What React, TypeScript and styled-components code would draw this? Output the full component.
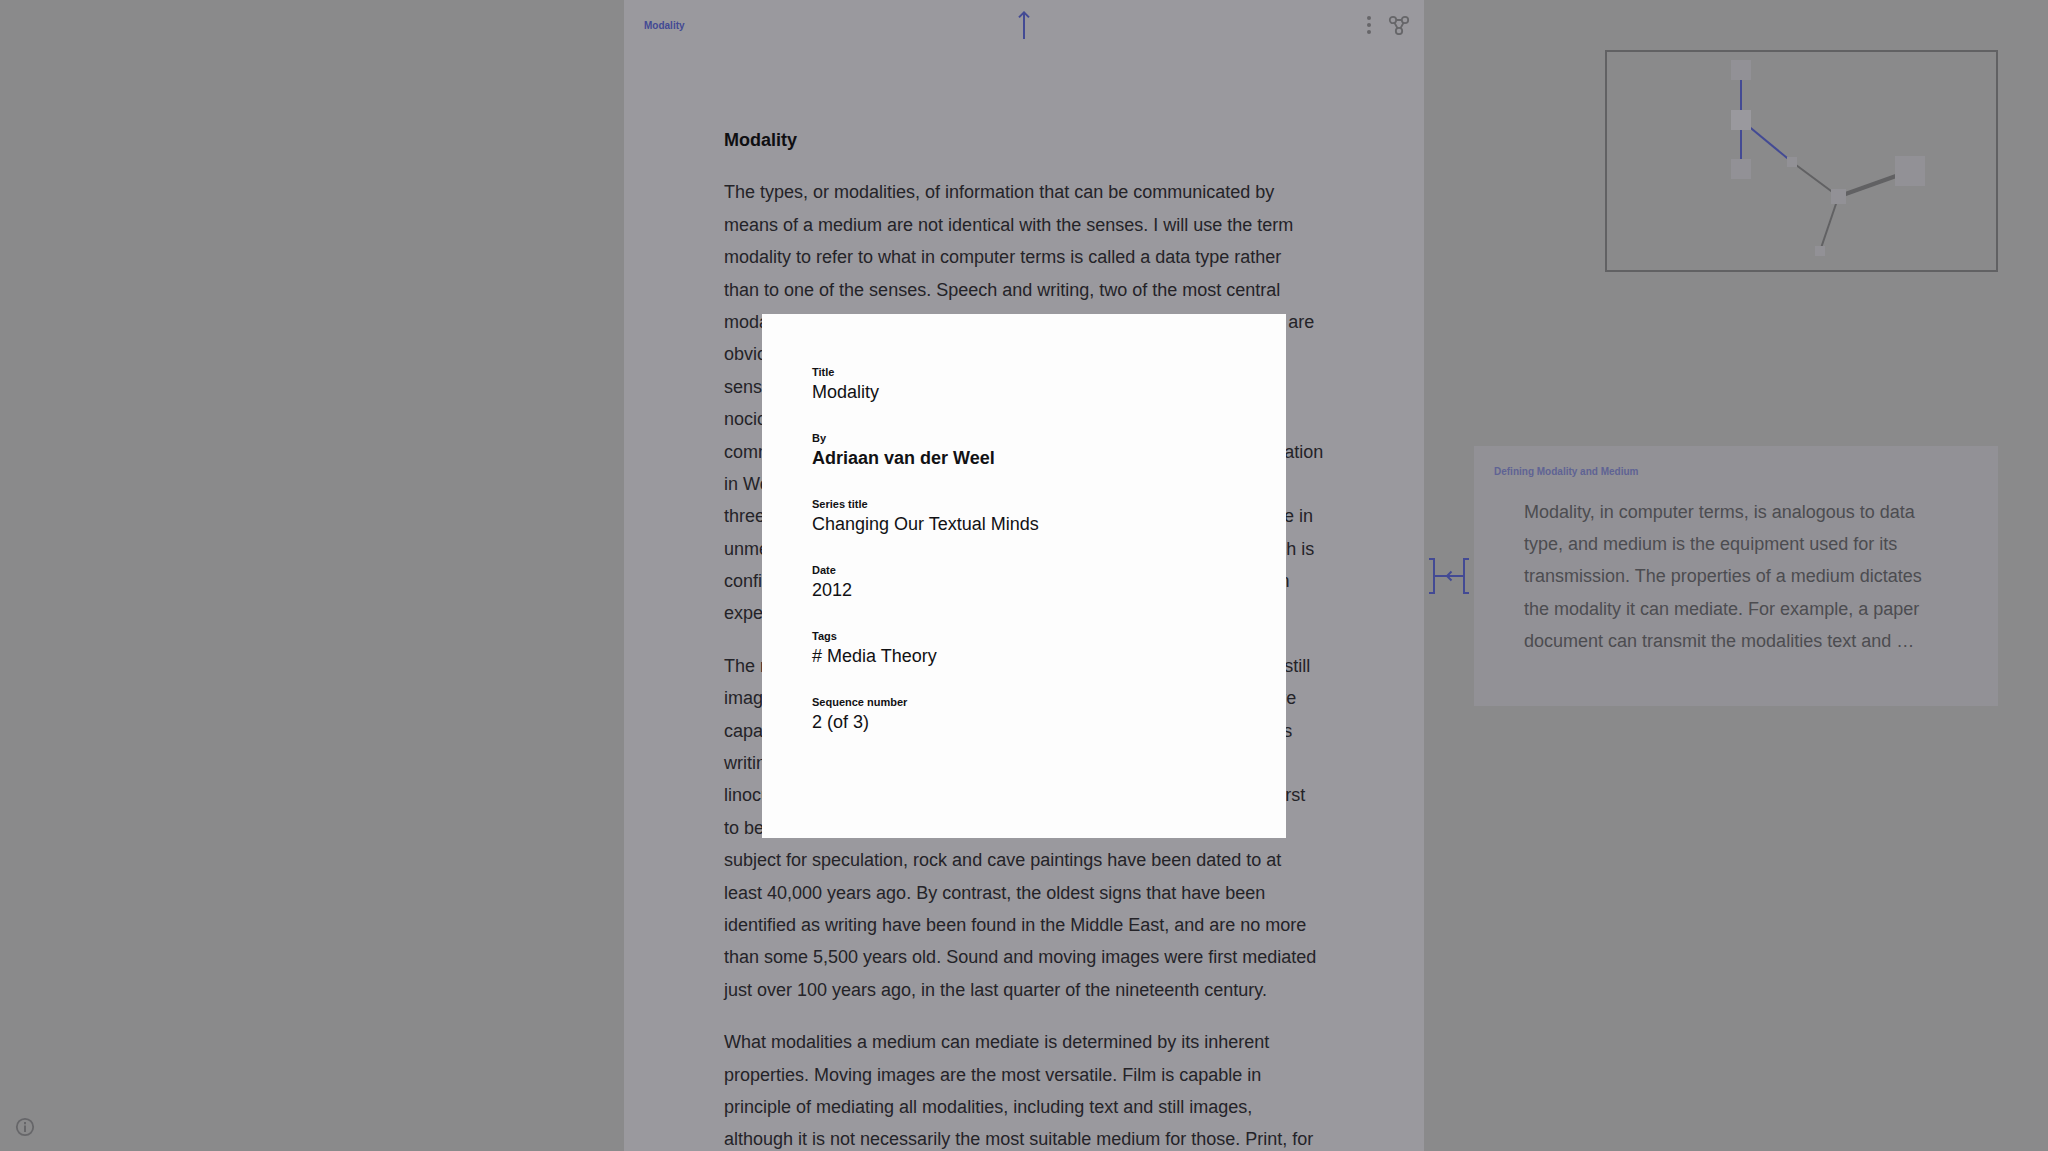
import React from "react";
import styled, { createGlobalStyle } from "styled-components";

const color = {
  desk: "#8a8a8b",
  page: "#9a999e",
  card: "#929196",
  line: "#616163",
  icon: "#666669",
  accent: "#434a94",
  accentSoft: "#5f6394",
};

const GlobalStyle = createGlobalStyle`
  * { box-sizing: border-box; }
  body {
    margin: 0;
    background: ${color.desk};
    font-family: "Helvetica Neue", "Liberation Sans", Arial, sans-serif;
    font-size: 18px;
    -webkit-font-smoothing: antialiased;
  }
  h1, h2, p, dl, dd { margin: 0; font-weight: inherit; font-size: inherit; }
`;

const Desk = styled.div`
  display: grid;
  grid-template-columns: 1fr 800px 1fr;
  height: 100vh;
  overflow: hidden;
`;

const IconButton = styled.button`
  display: flex;
  padding: 0;
  border: 0;
  background: none;
  color: ${color.icon};
  cursor: pointer;
`;

const LeftSide = styled.aside`
  display: flex;
  align-items: flex-end;
  padding: 14px 15px;
`;

const Page = styled.main`
  background: ${color.page};
  overflow: hidden;
`;

const PageHeader = styled.header`
  display: grid;
  grid-template-columns: 1fr auto 1fr;
  align-items: center;
  height: 50px;
  padding: 0 14px;
`;

const HeaderTitle = styled.div`
  display: flex;
  padding: 2px 6px 0;
`;

const SmallTitle = styled.a<{ $soft?: boolean }>`
  color: ${(p) => (p.$soft ? color.accentSoft : color.accent)};
  font-size: 10px;
  font-weight: 700;
  line-height: 16px;
  text-decoration: none;
`;

const Actions = styled.div`
  display: flex;
  justify-content: flex-end;
  align-items: center;
  gap: 7px;
`;

const Article = styled.article`
  display: flex;
  flex-direction: column;
  gap: 20px;
  padding: 74px 100px;
  color: #242328;
  line-height: 1.8;
`;

const Heading = styled.h1`
  && { font-weight: 700; }
  color: #0f0f12;
`;

const Paragraph = styled.p`
  white-space: pre;
`;

const RightSide = styled.aside`
  display: grid;
  grid-template-rows: 1fr auto 1fr;
  padding-right: 50px;
`;

const MapFrame = styled.div`
  justify-self: end;
  align-self: start;
  display: flex;
  margin-top: 50px;
  border: 2px solid ${color.line};
`;

const LinkRow = styled.div`
  display: grid;
  grid-template-columns: 50px 1fr;
  align-items: center;
`;

const Connector = styled.div`
  display: flex;
  justify-content: center;
  color: ${color.accent};
`;

const Card = styled.section`
  display: flex;
  flex-direction: column;
  gap: 16px;
  height: 260px;
  padding: 18px 20px;
  background: ${color.card};
`;

const CardText = styled.p`
  padding: 0 30px;
  color: #4c4c50;
  line-height: 1.8;
  white-space: pre;
`;

const Overlay = styled.div`
  position: fixed;
  inset: 0;
  display: grid;
  place-items: center;
`;

const Dialog = styled.section`
  width: 524px;
  aspect-ratio: 1;
  padding: 50px;
  background: #fdfdfd;
  color: #111114;
`;

const Fields = styled.dl`
  display: flex;
  flex-direction: column;
  gap: 26px;
`;

const Label = styled.dt`
  font-size: 11px;
  font-weight: 700;
  line-height: 16px;
`;

const Value = styled.dd<{ $strong?: boolean }>`
  && { font-weight: ${(p) => (p.$strong ? 700 : 400)}; }
  line-height: 24px;
`;

const paragraphs = [
  `The types, or modalities, of information that can be communicated by
means of a medium are not identical with the senses. I will use the term
modality to refer to what in computer terms is called a data type rather
than to one of the senses. Speech and writing, two of the most central
modalities with which we will often be concerned throughout this book, are
obviously perceived by way of the ear and the eye. Other
senses, such as touch, smell, taste, balance and even
nociception, may be involved in the way we take in any
communication of one kind or another, as the communication of information
in Western culture has come to rely chiefly on just
three modalities: text, still image and sound. These are readily available in
unmediated form as long as we are face to face with one another, which is
confined to the here and now and so to the direct and individual human
experience of those who are present.`,
  `The modalities of mediated communication are today text, sound, and still
images, and moving images. Not all media, however, by themselves are
capable of mediating every one of the modalities. Paper can, exactly as
writing tablets could, carry both text and drawings, and
linocuts may carry both too. Of the modalities, the still image was the first
to be mediated. Although the exact date remains a
subject for speculation, rock and cave paintings have been dated to at
least 40,000 years ago. By contrast, the oldest signs that have been
identified as writing have been found in the Middle East, and are no more
than some 5,500 years old. Sound and moving images were first mediated
just over 100 years ago, in the last quarter of the nineteenth century.`,
  `What modalities a medium can mediate is determined by its inherent
properties. Moving images are the most versatile. Film is capable in
principle of mediating all modalities, including text and still images,
although it is not necessarily the most suitable medium for those. Print, for`,
];

const summary = `Modality, in computer terms, is analogous to data
type, and medium is the equipment used for its
transmission. The properties of a medium dictates
the modality it can mediate. For example, a paper
document can transmit the modalities text and …`;

const fields = [
  { label: "Title", value: "Modality" },
  { label: "By", value: "Adriaan van der Weel", strong: true },
  { label: "Series title", value: "Changing Our Textual Minds" },
  { label: "Date", value: "2012" },
  { label: "Tags", value: "# Media Theory" },
  { label: "Sequence number", value: "2 (of 3)" },
];

const nodes = [
  { x: 126, y: 10, size: 20 },
  { x: 126, y: 60, size: 20, current: true },
  { x: 126, y: 109, size: 20 },
  { x: 182, y: 107, size: 10 },
  { x: 226, y: 139, size: 15 },
  { x: 290, y: 106, size: 30 },
  { x: 210, y: 196, size: 10 },
];

const edges = [
  { from: 0, to: 1, width: 2, active: true },
  { from: 1, to: 2, width: 2, active: true },
  { from: 1, to: 3, width: 2, active: true },
  { from: 3, to: 4, width: 2 },
  { from: 4, to: 5, width: 4 },
  { from: 4, to: 6, width: 2 },
];

const center = (i: number) => ({
  x: nodes[i].x + nodes[i].size / 2,
  y: nodes[i].y + nodes[i].size / 2,
});

function MiniMap() {
  return (
    <svg width="389" height="218" viewBox="2 2 389 218" role="img" aria-label="Map">
      {edges.map((e, i) => {
        const a = center(e.from);
        const b = center(e.to);
        return (
          <line
            key={i}
            x1={a.x}
            y1={a.y}
            x2={b.x}
            y2={b.y}
            stroke={e.active ? color.accent : color.line}
            strokeWidth={e.width}
          />
        );
      })}
      {nodes.map((n, i) => (
        <rect
          key={i}
          x={n.x}
          y={n.y}
          width={n.size}
          height={n.size}
          fill={n.current ? color.page : color.card}
        />
      ))}
    </svg>
  );
}

export default function App() {
  return (
    <>
      <GlobalStyle />
      <Desk>
        <LeftSide>
          <IconButton aria-label="Information">
            <svg width="20" height="20" viewBox="0 0 20 20" fill="none" stroke="currentColor">
              <circle cx="10" cy="10" r="8.2" strokeWidth="1.8" />
              <path d="M10 8.6V15M10 5V7.2" strokeWidth="2" />
            </svg>
          </IconButton>
        </LeftSide>

        <Page>
          <PageHeader>
            <HeaderTitle>
              <SmallTitle href="#modality">Modality</SmallTitle>
            </HeaderTitle>
            <IconButton aria-label="Up">
              <svg width="12" height="28" viewBox="0 0 12 28" fill="none" stroke={color.accent} strokeWidth="2">
                <path d="M6 28V1.5M1 6.4L6 1.4L11 6.4" />
              </svg>
            </IconButton>
            <Actions>
              <IconButton aria-label="More">
                <svg width="24" height="20" viewBox="0 0 24 20" fill="currentColor">
                  <circle cx="12" cy="3" r="2" />
                  <circle cx="12" cy="10" r="2" />
                  <circle cx="12" cy="17" r="2" />
                </svg>
              </IconButton>
              <IconButton aria-label="Graph">
                <svg width="22" height="20" viewBox="0 0 22 20" fill="none" stroke="currentColor" strokeWidth="1.8">
                  <circle cx="5" cy="5" r="3.2" />
                  <circle cx="17" cy="5" r="3.2" />
                  <circle cx="11" cy="16" r="3.2" />
                  <path d="M8.2 5H13.8M6.5 7.8L9.5 13.2M15.5 7.8L12.5 13.2" />
                </svg>
              </IconButton>
            </Actions>
          </PageHeader>
          <Article>
            <Heading>Modality</Heading>
            {paragraphs.map((text) => (
              <Paragraph key={text}>{text}</Paragraph>
            ))}
          </Article>
        </Page>

        <RightSide>
          <MapFrame>
            <MiniMap />
          </MapFrame>
          <LinkRow>
            <Connector>
              <svg width="40" height="36" viewBox="0 0 40 36" fill="none" stroke="currentColor" strokeWidth="2">
                <path d="M0 1H5V35H0M40 1H35V35H40M5 18H35M22.5 13.5L18 18L22.5 22.5" />
              </svg>
            </Connector>
            <Card>
              <SmallTitle $soft href="#defining">
                Defining Modality and Medium
              </SmallTitle>
              <CardText>{summary}</CardText>
            </Card>
          </LinkRow>
        </RightSide>
      </Desk>

      <Overlay>
        <Dialog role="dialog" aria-label="Details">
          <Fields>
            {fields.map((f) => (
              <div key={f.label}>
                <Label>{f.label}</Label>
                <Value $strong={f.strong}>{f.value}</Value>
              </div>
            ))}
          </Fields>
        </Dialog>
      </Overlay>
    </>
  );
}
